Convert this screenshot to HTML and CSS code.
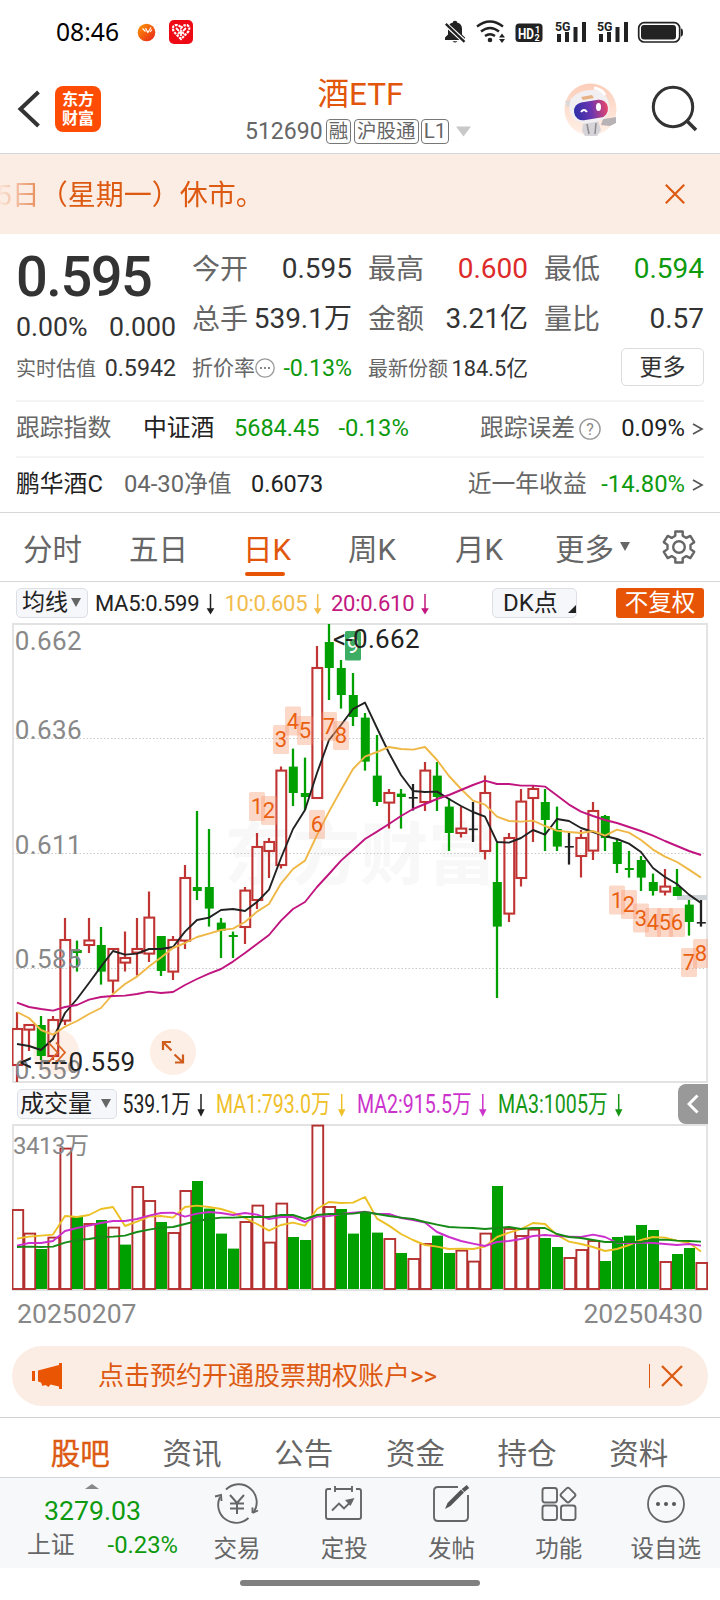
FILE: index.html
```html
<!DOCTYPE html>
<html lang="zh-CN">
<head>
<meta charset="utf-8">
<meta name="viewport" content="width=device-width, initial-scale=1">
<title>酒ETF 512690</title>
<link rel="stylesheet" href="styles.css">
</head>
<body>
<div class="phone">
  <div class="status">
    <span class="clock">08:46</span>
    <svg class="status-apps" width="60" height="30" viewBox="134 17 60 30">
      <defs><linearGradient id="ball" x1="0" y1="0" x2="1" y2="1"><stop offset="0" stop-color="#ff9a00"/><stop offset="1" stop-color="#e8201c"/></linearGradient></defs>
      <circle cx="146.500" cy="32.500" r="8.800" fill="url(#ball)"/>
      <path d="M142.500 28.500l3 3M145.500 28l2 4M147.500 33l3.500-5.500M150 32l2-2.500" stroke="#fff" stroke-width="1.200" fill="none"/>
      <rect x="169" y="20" width="24" height="24" rx="5" fill="#ee0a14"/>
      <path d="M181 39L174 32Q171 26 176 25Q180 25 181 28Q183 25 187 25Q191 27 188 32Z" fill="none" stroke="#fff" stroke-width="2.200" stroke-dasharray="2.500 1"/>
      <path d="M176 28l3 3M181 30v6M186 28l-3 3M178 34l2-2M184 34l-2-2" stroke="#fff" stroke-width="1.800"/>
    </svg>
    <svg class="status-right" width="242" height="30" viewBox="442 17 242 30">
      <g fill="#222">
        <path d="M445 40v-2.500l3-3V29q0-5.500 5-6.500v-1q2-1.500 4 0v1q5 1 5 6.500v5.500l3 3V40z"/>
        <path d="M452.500 41.300h5q-2.500 2.600-5 0z"/>
        <path d="M446 24.500L465 42" stroke="#fff" stroke-width="4.500"/>
        <path d="M445.800 23.800L464.500 41.800" stroke="#222" stroke-width="2.300"/>
        <circle cx="490" cy="40" r="2.300"/>
        <path d="M502 33.500l3 4h-6zM502 43l3-4h-6z"/>
        <rect x="515.500" y="23.500" width="27" height="18.500" rx="3.500"/>
        <path d="M557 34h4v8h-4zM565 32h4v10h-4zM573.500 27h4v15h-4zM582 22h4v20h-4zM599 34h4v8h-4zM607 32h4v10h-4zM615.500 27h4v15h-4zM624 22h4v20h-4z"/>
        <rect x="641" y="25" width="35" height="14.500" rx="3"/>
        <path d="M681 28.500q2 0 2 4t-2 4z"/>
      </g>
      <g fill="none" stroke="#222" stroke-width="2.400">
        <path d="M477 26.500Q490 16.500 503 26.500M481 31.500Q490 24.500 499 31.500M485 36Q490 32.500 495 36"/>
        <rect x="638.700" y="22.700" width="41" height="19.300" rx="5.500" stroke-width="1.700"/>
      </g>
      <g class="status-text">
        <text x="518" y="38.500" font-size="14" textLength="16" lengthAdjust="spacingAndGlyphs" fill="#fff">HD</text>
        <text x="535" y="32.500" font-size="9" fill="#fff">1</text>
        <text x="534.500" y="40.500" font-size="9" fill="#fff">2</text>
        <text x="555" y="31" font-size="13.500" textLength="15.500" lengthAdjust="spacingAndGlyphs" fill="#222">5G</text>
        <text x="597" y="31" font-size="13.500" textLength="15.500" lengthAdjust="spacingAndGlyphs" fill="#222">5G</text>
      </g>
    </svg>
  </div>

  <header class="header">
    <div class="header-left">
      <svg width="24" height="44" viewBox="17 87 24 44"><path d="M38.500 92L20.500 109L38.500 126" fill="none" stroke="#333" stroke-width="4"/></svg>
      <div class="logo">东方<br>财富</div>
    </div>
    <div class="title-box">
      <div class="title">酒ETF</div>
      <div class="subtitle"><span class="code">512690</span><span class="badge">融</span><span class="badge">沪股通</span><span class="badge level">L1</span>
        <svg class="caret" width="15" height="11" viewBox="0 0 15 11"><path d="M0 .5h15L7.500 10.500z" fill="#c8c8c8"/></svg>
      </div>
    </div>
    <div class="header-right">
      <svg width="56" height="56" viewBox="563 81 56 56">
        <defs>
          <linearGradient id="visor" x1="0" y1="0" x2="1" y2="0"><stop offset="0" stop-color="#2c2fa8"/><stop offset=".5" stop-color="#6a35b0"/><stop offset="1" stop-color="#e8456a"/></linearGradient>
          <linearGradient id="halo" x1="0" y1="0" x2="0" y2="1"><stop offset="0" stop-color="#fccdb9"/><stop offset="1" stop-color="#fff1e8"/></linearGradient>
        </defs>
        <circle cx="590.500" cy="109.500" r="26" fill="url(#halo)"/>
        <path d="M565 101l5-1 2 6-5 1z" fill="#ddd8da"/>
        <path d="M583 124l15-3 3 9-4 6h-12l-3-5z" fill="#d6d4d8"/>
        <path d="M603 119l8-1 5-1v6l-6 3-9-1z" fill="#b6b2b6"/>
        <path d="M587 124l2 10M596 123l-1 11" stroke="#8e8a90" stroke-width="1.500"/>
        <path d="M571 99Q578 90 592 90Q606 89 609 104Q611 116 602 120Q588 126 576 121Q566 113 571 99z" fill="#f1eff1"/>
        <rect x="574" y="101" width="34" height="18" rx="8.500" transform="rotate(-9 591 110)" fill="url(#visor)"/>
        <path d="M581 112q3-4 6 0" stroke="#fff" stroke-width="2" fill="none"/>
        <ellipse cx="598.500" cy="107" rx="2.500" ry="4" fill="#fff"/>
        <path d="M581 97l11-2 2 3-11 2z" fill="#e6b184"/>
        <path d="M594 88q8 1 11 7" stroke="#fff" stroke-width="3" fill="none"/>
      </svg>
      <svg width="48" height="48" viewBox="651 85 48 48"><circle cx="673" cy="107" r="19.700" fill="none" stroke="#333" stroke-width="3"/><path d="M686.500 120.500L696 130" stroke="#333" stroke-width="3.600"/></svg>
    </div>
  </header>

  <div class="notice">
    <div class="notice-text">5日（星期一）休市。</div>
    <svg class="notice-close" width="20" height="20" viewBox="0 0 20 20"><path d="M.8.800l18.400 18.400M19.200.800L.8 19.200" stroke="#dd5a12" stroke-width="2.200"/></svg>
  </div>

  <section class="quote">
    <div class="grid">
      <div class="price-box">
        <div class="price">0.595</div>
        <div class="change"><span>0.00%</span><span>0.000</span></div>
      </div>
      <div class="cell"><label>今开</label><b>0.595</b></div>
      <div class="cell"><label>最高</label><b class="up">0.600</b></div>
      <div class="cell"><label>最低</label><b class="down">0.594</b></div>
      <div class="cell"><label>总手</label><b>539.1万</b></div>
      <div class="cell"><label>金额</label><b>3.21亿</b></div>
      <div class="cell"><label>量比</label><b>0.57</b></div>
      <div class="cell small"><label>实时估值</label><b>0.5942</b></div>
      <div class="cell small"><label class="with-icon">折价率<svg width="20" height="20" viewBox="0 0 20 20"><circle cx="10" cy="10" r="9.200" fill="none" stroke="#999" stroke-width="1.300"/><path d="M5 10h2M9 10h2M13 10h2" stroke="#888" stroke-width="2"/></svg></label><b class="down">-0.13%</b></div>
      <div class="cell small"><label>最新份额</label><b class="share">184.5亿</b></div>
      <div class="cell small more-cell"><span class="more">更多</span></div>
    </div>
    <div class="line-row">
      <span class="c-gray w-a">跟踪指数</span><span class="w-b">中证酒</span><span class="down num">5684.45</span><span class="down pct">-0.13%</span>
      <span class="right"><span class="c-gray">跟踪误差</span><svg class="help" width="22" height="22" viewBox="0 0 22 22"><circle cx="11" cy="11" r="10.100" fill="none" stroke="#999" stroke-width="1.400"/><text x="11" y="16.500" text-anchor="middle" font-size="16" fill="#888">?</text></svg><span>0.09%</span><svg class="gt" width="12" height="14" viewBox="0 0 12 14"><path d="M1 2l9 5-9 5" fill="none" stroke="#555" stroke-width="1.700"/></svg></span>
    </div>
    <div class="line-row">
      <span class="w-c">鹏华酒C</span><span class="c-gray w-d">04-30净值</span><span class="num">0.6073</span>
      <span class="right"><span class="c-gray w-e">近一年收益</span><span class="down">-14.80%</span><svg class="gt" width="12" height="14" viewBox="0 0 12 14"><path d="M1 2l9 5-9 5" fill="none" stroke="#555" stroke-width="1.700"/></svg></span>
    </div>
  </section>

  <nav class="periods">
    <span>分时</span><span>五日</span><span class="active">日K</span><span>周K</span><span>月K</span>
    <span class="period-more">更多<svg width="10" height="9" viewBox="0 0 10 9"><path d="M0 0h10L5 9z" fill="#666"/></svg></span>
    <svg class="gear" width="36" height="36" viewBox="661 529 36 36" fill="none" stroke="#666" stroke-width="2.400" stroke-linejoin="round"><circle cx="679" cy="547" r="5.800"/><path d="M675.300 531.500h7.400v4.200l3.600 2.200 4-2 3.900 6.300-3.700 2.700v4.200l3.700 2.700-3.900 6.300-4-2-3.600 2.200v4.200h-7.400v-4.200l-3.600-2.200-4 2-3.900-6.300 3.700-2.700v-4.200l-3.700-2.700 3.900-6.300 4 2 3.600-2.200z"/></svg>
  </nav>

  <div class="ma-row">
    <span class="chip chip-ma">均线<svg width="10" height="9" viewBox="0 0 10 9"><path d="M0 0h10L5 9z" fill="#666"/></svg></span>
    <svg class="legend" width="350" height="41" viewBox="92 582 350 41" font-size="22">
      <g fill="#222" stroke="#222"><text x="95" y="610.700" textLength="104.500">MA5:0.599</text><path d="M210.500 594v17M208 609l2.500 4 2.500-4z"/></g>
      <g fill="#f2bc4c" stroke="#f2bc4c"><text x="224.500" y="610.700" textLength="83">10:0.605</text><path d="M317.700 594v17M315.200 609l2.500 4 2.500-4z"/></g>
      <g fill="#c2187f" stroke="#c2187f"><text x="331" y="610.700" textLength="83.500">20:0.610</text><path d="M425 594v17M422.500 609l2.500 4 2.500-4z"/></g>
    </svg>
    <span class="chip chip-dk">DK点<svg width="8" height="8" viewBox="0 0 8 8"><path d="M8 0v8H0z" fill="#222"/></svg></span>
    <span class="chip-adjust">不复权</span>
  </div>

  <svg id="kline" class="chart" width="696" height="460" viewBox="12 623 696 460">
    <text class="watermark" x="224" y="879">东方财富</text>
    <g fill="none" stroke="#c9c9c9" stroke-dasharray="1.500 2"><path d="M13 738.500H707M13 853.500H707M13 968.500H707"/></g>
    <path d="M13 624H707V1082H13Z" fill="none" stroke="#e2e2e2" stroke-width="1.800"/>
  </svg>

  <div class="vol-row">
    <span class="chip chip-vol">成交量<svg width="10" height="9" viewBox="0 0 10 9"><path d="M0 0h10L5 9z" fill="#666"/></svg></span>
    <svg class="legend" width="510" height="41" viewBox="120 1083 510 41" font-size="25">
      <g fill="#222" stroke="#222"><text x="122.500" y="1113" textLength="68" lengthAdjust="spacingAndGlyphs">539.1万</text><path d="M201 1094v17M198.500 1110l2.500 5 2.500-5z"/></g>
      <g fill="#efc02a" stroke="#efc02a"><text x="216" y="1113" textLength="114.500" lengthAdjust="spacingAndGlyphs">MA1:793.0万</text><path d="M341.700 1094v17M339.200 1110l2.500 5 2.500-5z"/></g>
      <g fill="#cc33cc" stroke="#cc33cc"><text x="357" y="1113" textLength="114.500" lengthAdjust="spacingAndGlyphs">MA2:915.5万</text><path d="M482.800 1094v17M480.300 1110l2.500 5 2.500-5z"/></g>
      <g fill="#159615" stroke="#159615"><text x="498" y="1113" textLength="109.500" lengthAdjust="spacingAndGlyphs">MA3:1005万</text><path d="M618.700 1094v17M616.200 1110l2.500 5 2.500-5z"/></g>
    </svg>
    <span class="collapse"><svg width="12" height="20" viewBox="0 0 12 20"><path d="M10.500 1.500L2 10l8.500 8.500" fill="none" stroke="#fff" stroke-width="3"/></svg></span>
  </div>

  <svg id="volume" class="chart" width="696" height="167" viewBox="12 1124 696 167">
    <path d="M13 1125H707V1290H13Z" fill="none" stroke="#e2e2e2" stroke-width="1.800"/>
  </svg>

  <div class="dates"><span>20250207</span><span>20250430</span></div>

  <div class="promo">
    <svg width="32" height="28" viewBox="31 1362 32 28" fill="#ea5504"><path d="M32 1371h3v10h-3zM38 1370.500l21-5.500v-2h3v26h-3v-2.500l-8.500-2 -2 2.500-3-2-3 1-1.500-3.500-3-1z"/></svg>
    <span class="promo-text">点击预约开通股票期权账户&gt;&gt;</span>
    <i class="promo-sep"></i>
    <svg width="22" height="22" viewBox="0 0 22 22"><path d="M1 1l20 20M21 1L1 21" stroke="#dd5a12" stroke-width="2.300"/></svg>
  </div>

  <nav class="sections"><span class="active">股吧</span><span>资讯</span><span>公告</span><span>资金</span><span>持仓</span><span>资料</span></nav>

  <footer class="bottom">
    <div class="index">
      <svg class="index-caret" width="14" height="5" viewBox="0 0 14 5"><path d="M7 0l7 5H0z" fill="#888"/></svg>
      <div class="index-value">3279.03</div>
      <div class="index-row"><span>上证</span><span class="down">-0.23%</span></div>
    </div>
    <div class="tool"><svg width="46" height="44" viewBox="214 1482 46 44" fill="none" stroke="#666" stroke-width="1.900"><path d="M226 1489.500A18 18 0 0 1 253.500 1512.500M248.500 1518A18 18 0 0 1 220 1497"/><path d="M215 1496.500l6-1.500.5 6M252.500 1513l5.500-2.500M252.500 1507.500v5.500"/><path d="M230 1495l7 8 7-8M230 1503.500h14M230 1508.500h14M237 1503v11" stroke-width="2"/></svg>交易</div>
    <div class="tool"><svg width="46" height="44" viewBox="322 1482 46 44" fill="none" stroke="#666" stroke-width="1.900"><path d="M332 1489h-3q-2 0-2 2v26q0 2 2 2h31q2 0 2-2v-26q0-2-2-2h-3M336 1489h17M336 1486v6M353 1486v6"/><path d="M333 1510.500l7-7 5 5 8-8"/><path d="M346 1500l9.500-2-4 8z" fill="#666" stroke="none"/></svg>定投</div>
    <div class="tool"><svg width="46" height="44" viewBox="428 1482 46 44" fill="none" stroke="#666" stroke-width="1.900"><path d="M458 1487h-20q-4 0-4 4v26q0 4 4 4h26q4 0 4-4v-22"/><path d="M445 1509l2.500-6L461 1489.500l3 3-13.500 13.500z" fill="#555" stroke="none"/><path d="M463 1490.500l5-4" stroke="#555" stroke-width="4"/></svg>发帖</div>
    <div class="tool"><svg width="46" height="44" viewBox="535 1482 46 44" fill="none" stroke="#666" stroke-width="1.900"><rect x="541.500" y="1488" width="14.500" height="14.500" rx="2.500"/><rect x="541.500" y="1505.500" width="14.500" height="14.500" rx="2.500"/><rect x="560" y="1505.500" width="14.500" height="14.500" rx="2.500"/><rect x="561.300" y="1489.300" width="11.500" height="11.500" rx="2" transform="rotate(45 567 1495)"/></svg>功能</div>
    <div class="tool"><svg width="46" height="44" viewBox="643 1482 46 44" fill="none" stroke="#666" stroke-width="1.800"><circle cx="666" cy="1504" r="18"/><g fill="#555" stroke="none"><circle cx="658" cy="1504" r="2"/><circle cx="666" cy="1504" r="2"/><circle cx="674" cy="1504" r="2"/></g></svg>设自选</div>
  </footer>
  <div class="home"><i></i></div>
</div>
<script src="chart.js"></script>
</body>
</html>
```
FILE: styles.css
```css
* { box-sizing: border-box; }
body { margin: 0; background: #fff; }
.phone { width: 720px; height: 1600px; overflow: hidden; background: #fff; color: #333; font-family: Roboto, "Noto Sans CJK SC", sans-serif; font-size: 24px; line-height: 1; white-space: nowrap; }
svg { display: block; flex: none; }
svg text { font-family: Roboto, "Noto Sans CJK SC", sans-serif; stroke: none; }
.up { color: #dd2a2a; }
.down { color: #0e9a0e; }
.c-gray { color: #666; }

.status { height: 64px; display: flex; align-items: center; padding: 0 36.500px 0 56px; }
.clock { font: 24.700px/30px "Noto Sans", sans-serif; color: #000; width: 78px; }
.status-right { margin-left: auto; }
.status-text { font-weight: 700; }

.header { height: 90px; border-bottom: 1.500px solid #d3d6da; display: grid; grid-template-columns: 200px 320px 200px; }
.header-left { display: flex; align-items: center; padding-left: 17px; gap: 14px; }
.logo { width: 46px; height: 46px; border-radius: 8px; background: #ff4c05; color: #fff; font-weight: 700; font-size: 16px; line-height: 19px; text-align: center; padding-top: 4px; }
.title-box { padding-top: 14px; }
.title { color: #e2560c; font-size: 31.500px; line-height: 34px; text-align: center; padding-left: 1px; }
.subtitle { display: flex; align-items: center; color: #666; height: 33px; padding: 6px 0 0 45px; }
.code { font-size: 23px; width: 80.500px; line-height: 28px; }
.badge { border: 1.300px solid #777; border-radius: 4px; font-size: 19.500px; line-height: 23px; height: 25px; padding: 0 2.200px; margin-right: 2.500px; }
.badge.level { font-size: 20.500px; padding: 0 1.500px; }
.caret { margin-left: 5px; }
.header-right { display: flex; align-items: center; padding-left: 43px; gap: 32px; }

.notice { height: 80px; background: #fcede4; display: flex; align-items: center; justify-content: space-between; padding-right: 35px; color: #dd5a12; }
.notice-text { font-size: 28px; line-height: 76px; padding-top: 4px; margin-left: -4px; -webkit-mask-image: linear-gradient(90deg, transparent 0, #000 64px); mask-image: linear-gradient(90deg, transparent 0, #000 64px); }

.quote { border-bottom: 1.500px solid #d8d8d8; height: 279px; padding: 9px 16px 0; }
.grid { display: grid; grid-template-columns: repeat(4, 160px); column-gap: 16px; grid-auto-rows: 50px; height: 157px; }
.price-box { grid-row: span 2; }
.price { font-size: 56px; font-weight: 500; line-height: 68px; letter-spacing: -1.500px; }
.change { display: flex; justify-content: space-between; font-size: 26.700px; line-height: 33px; }
.cell { display: flex; align-items: center; justify-content: space-between; padding-top: 3px; }
.cell label { font-size: 28px; color: #666; }
.cell b { font-weight: 400; font-size: 28px; margin-top: -1px; }
.small { padding-top: 1.500px; }
.small label { font-size: 20px; }
.small b { font-size: 23.200px; margin-top: 0; }
.small .share { font-size: 21.800px; }
.small .with-icon { display: flex; align-items: center; font-size: 21px; }
.with-icon svg { margin-top: -2px; }
.more-cell { justify-content: flex-end; padding-top: 0; }
.more { width: 83px; height: 38px; border: 1.500px solid #dcdcdc; border-radius: 5px; text-align: center; font-size: 23px; line-height: 37px; margin-top: -2px; }
.line-row { height: 56px; border-top: 2px solid #f4f4f4; display: flex; align-items: center; font-size: 23.800px; color: #222; }
.line-row .down { color: #0e9a0e; }
.line-row .c-gray { color: #666; }
.w-a { width: 127px; }
.w-b { width: 91px; }
.w-c { width: 108px; }
.w-d { width: 127px; }
.w-e { margin-right: 14.500px; }
.num { font-size: 23.500px; }
.pct { margin-left: 19px; }
.right { margin-left: auto; display: flex; align-items: center; }
.help { margin: 0 20px 0 4px; }
.gt { margin-left: 7px; }

.periods { height: 69px; border-bottom: 1.500px solid #d8d8d8; display: grid; grid-template-columns: 106px 113px 106px 107px 92px 114px auto; padding-left: 23px; align-items: center; font-size: 29.500px; color: #666; }
.periods span { position: relative; height: 67.500px; line-height: 75px; }
.periods .active { color: #e2560c; padding-left: 1px; }
.periods .active::after { content: ""; position: absolute; left: 3px; bottom: 4.500px; width: 40px; height: 4px; border-radius: 2px; background: #e85405; }
.period-more { display: flex; align-items: flex-start; gap: 6px; padding-left: 8px; }
.period-more svg { margin-top: 29px; }
.gear { margin-top: -1px; }

.ma-row, .vol-row { height: 41px; display: flex; align-items: center; padding-left: 16px; }
.chip { display: flex; align-items: center; height: 30px; border: 1.500px solid #dcdfe5; border-radius: 5px; background: #f6f7fa; color: #222; font-size: 23.500px; }
.chip-ma { width: 72px; padding-left: 5px; margin-right: 4px; gap: 3px; font-size: 23px; }
.chip-dk { width: 85px; padding-left: 10px; margin-left: 50px; font-size: 24px; }
.chip-dk svg { margin: 13px 0 0 10px; }
.chip-adjust { width: 88px; height: 30px; margin-left: 39px; border-radius: 3px; background: #e85405; color: #fff; font-size: 23.500px; line-height: 31px; text-align: center; }
.legend path { stroke-width: 1.500px; }
.chart { margin-left: 12px; }
.watermark { font-size: 68px; font-weight: 700; fill: #f8f8f8; }
.axis { font-size: 26px; fill: #888; letter-spacing: .4px; }
.td { font-size: 22px; fill: #ea5f10; text-anchor: middle; }
.callout { font-size: 26px; fill: #222; letter-spacing: .3px; }
.vol-row { padding-left: 17px; }
.chip-vol { width: 100px; padding-left: 2px; gap: 9px; margin-right: 3px; font-size: 24px; }
.collapse { width: 30px; height: 40px; margin-left: 48px; border-radius: 8px 0 0 8px; background: #999; display: grid; place-items: center; }

.dates { height: 44px; display: flex; justify-content: space-between; padding: 0 17px 0 17px; color: #888; font-size: 26.600px; line-height: 45px; }
.promo { height: 60px; margin: 11px 12px 0; border-radius: 30px; background: #fcede4; color: #dd5a12; display: flex; align-items: center; padding: 0 25px 0 19px; }
.promo-text { font-size: 26px; line-height: 61px; margin-left: 35px; }
.promo-sep { width: 1.500px; height: 24px; background: #dd5a12; margin: 0 11px 0 auto; }

.sections { height: 60px; margin-top: 11px; border-top: 1.500px solid #d3d3d3; display: grid; grid-template-columns: repeat(6, 111.700px); padding-left: 24.500px; font-size: 29.500px; color: #666; text-align: center; line-height: 72.500px; }
.sections .active { color: #dd5a12; -webkit-text-stroke: .4px #dd5a12; }
.bottom { height: 91px; background: #f7f8fa; border-top: 1.500px solid #d3d6da; display: grid; grid-template-columns: 183.500px repeat(5, 107.200px); color: #666; }
.index-caret { margin: 6px 0 0 85px; }
.index-value { font-size: 26.700px; line-height: 32px; color: #0e9a0e; padding-left: 44px; margin-top: 6px; }
.index-row { display: flex; gap: 33px; padding-left: 27px; line-height: 36px; font-size: 23.800px; }
.tool { display: flex; flex-direction: column; align-items: center; font-size: 23.500px; line-height: 46px; padding-top: 4px; }
.home { height: 32px; display: flex; justify-content: center; padding-top: 12px; }
.home i { width: 240px; height: 6px; border-radius: 3px; background: #808080; }
```
FILE: chart.js
```js
const NS = "http://www.w3.org/2000/svg";
const RED = "#c03434", GREEN = "#00a000", BLACK = "#222";
const xAt = i => 17 + 12 * i;

function add(parent, tag, attrs, text) {
  const el = document.createElementNS(NS, tag);
  for (const k in attrs) el.setAttribute(k, attrs[k]);
  if (text) el.textContent = text;
  parent.appendChild(el);
  return el;
}
function line(parent, ys, color) {
  add(parent, "polyline", { points: ys.map((y, i) => xAt(i) + "," + y).join(" "), fill: "none", stroke: color, "stroke-width": 1.9, "stroke-linejoin": "round" });
}

// kind, high, body top, body bottom, low
const candles = [
  ["r",1012,1029,1065,1082],["r",1024,1025,1029.6,1051],["g",1016,1025,1056,1060],["r",1016,1020,1056,1060],
  ["r",918,940,1020.6,1025],["g",940.6,950,953,971.6],["r",918,940.5,945,953],["g",927,945,971.6,984.6],
  ["r",948.6,949,980.6,993],["r",931.6,958,962.6,971.6],["r",918,949,952.6,975.6],["r",891.6,917.6,953.6,962],
  ["g",936,936,971,976],["r",936,940,971.6,980],["r",865,878,940.6,949],["g",811,887,891,900],
  ["g",829,887,908.6,926.6],["g",918,922.6,930.6,958],["g",931.6,935,937,958],["r",887,890.6,927,944],
  ["r",833,847,900,909],["r",838,842,851,878],["r",766.6,770.6,865,868.6],["g",748.6,766.6,793,806],
  ["g",757.6,793,797,810],["r",646,668,798,798],["g",624,642,668,700],["g",660,668,695,708.6],
  ["g",673,695,717,726],["g",713,717.6,761.6,770.6],["g",735,775.6,802,806],["r",789,793,802.6,828.6],
  ["g",789,793.6,797,828.6],["k",784,797,798.5,810.6],["r",762,770.6,802,811],["g",762,775.6,797,811],
  ["g",798,806.6,833,851],["r",806.6,828.6,833,837.6],["k",802,828.5,830,842],["r",775.6,793,851,859.6],
  ["g",842.6,882,926.6,998],["r",833,838,913.6,922],["r",789,801.6,878,886.6],["r",785,789,798,842],
  ["g",789,802,820,851],["g",806.6,829,846.6,851],["k",833,846,847.5,864.6],["r",830,838,856,877.6],
  ["r",802,811,850.6,860],["g",815,816,838,851],["g",838.6,842,864,873],["g",851,868,870,877.6],
  ["g",856,860,877.6,891],["g",873.6,882,891,895.6],["r",869,886.6,891.6,895.6],["g",869,887,896,896],
  ["g",900,904.6,922,935.6],["k",900,922,923.5,926.6]
];
const ma5 = [1044,1046,1050,1039,1013,999,983,966.6,951,954.6,953.6,949,949,947,931.6,920,917.6,910,909,911,902,889.6,858,829,810,773,740,725,709,702.6,728,753,775,791,792,791.6,799,806,812,816.6,842,842.6,838,830,834.6,819,821,828,832,836,839,843.6,852,868,877,884,894.6,903];
const ma10 = [1012,1018,1030,1034.6,1026.6,1021,1014,1008,994,984,976.6,966.6,957.6,948,943,937,933.6,930,928.6,922,911.6,904,883.6,869,860.6,835,811.6,790,769,756.6,752,747,749,749.6,747,760,776,789,800.6,804.6,816.6,821,821.6,820.6,826,830.6,832,833,831,835.6,829.6,832.6,840,849.6,856.6,862,869.6,877.6];
const ma20 = [1002.6,1007,1009,1010.6,1007,1005,999.6,997,996,995.6,994,991.6,993,992,985,979,973.6,969,961.6,953,944,935,920.6,909,902,887,874,860.6,850,839,831.6,824,816,809,804,799,795,790,785,780.6,784,784,785.6,785.6,786.6,795.6,804.6,811.6,816,820,823,827,831,835.6,841,846,851,855];

const k = document.getElementById("kline");
add(k, "circle", { cx: 56, cy: 1052, r: 23, fill: "#fdeee6" });
add(k, "rect", { x: 677, y: 895, width: 30, height: 5, fill: "#cfd4d8" });
candles.forEach(([kind, high, top, bottom, low], i) => {
  const x = xAt(i);
  if (kind === "r") {
    add(k, "path", { d: `M${x} ${high}V${top}M${x} ${bottom}V${low}`, stroke: RED, "stroke-width": 2.2 });
    add(k, "rect", { x: x - 4.6, y: top, width: 9.8, height: Math.max(bottom - top, 1), fill: "none", stroke: RED, "stroke-width": 2.1 });
  } else {
    const c = kind === "g" ? GREEN : BLACK;
    add(k, "path", { d: `M${x} ${high}V${low}`, stroke: c, "stroke-width": 2.3 });
    add(k, "rect", { x: x - 4.2, y: top, width: 9, height: Math.max(bottom - top, 1.6), fill: c });
  }
});

[["0.662",650],["0.636",738.6],["0.611",854],["0.585",967.6],["0.559",1078.6]].forEach(([t, y]) =>
  add(k, "text", { class: "axis", x: 14.8, y }, t));

line(k, ma5, BLACK);
line(k, ma10, "#efb846");
line(k, ma20, "#c0147e");

// sequence counters: label, candle index, box top
[[1,20,792],[2,21,796],[3,22,725],[4,23,706.6],[5,24,716],[6,25,810],[7,26,712],[8,27,721],
 [1,50,885.6],[2,51,890],[3,52,903.6],[4,53,908],[5,54,908],[6,55,908],[7,56,948],[8,57,939]].forEach(([n, i, y]) => {
  add(k, "rect", { x: xAt(i) - 8, y, width: 16, height: 29, rx: 1.5, fill: "#f79468", "fill-opacity": .36 });
  add(k, "text", { class: "td", x: xAt(i), y: y + 22.3 }, String(n));
});
add(k, "rect", { x: 345, y: 631, width: 16, height: 29.5, rx: 1.5, fill: "#3dad63" });
add(k, "text", { class: "td", x: 353, y: 653, style: "fill:#fff" }, "9");

add(k, "path", { d: "M48.500 1042.500l9 10-9 10M56 1042.500l9 10-9 10", fill: "none", stroke: "#dc6420", "stroke-width": 1.8 });
add(k, "circle", { cx: 173, cy: 1052, r: 23, fill: "#fdeee6" });
add(k, "path", { d: "M163 1050v-8h8M163 1042l8.500 8.500M174.500 1054.500l8.500 8M175 1062.500h8v-8", fill: "none", stroke: "#cf5c1d", "stroke-width": 2.2 });

add(k, "text", { class: "callout", x: "333 345.5 353", y: 647.5 }, "<-0.662");
add(k, "text", { class: "callout", x: "19.5 34.5 43 51.500 60 68.500", y: 1071 }, "<----0.559");

const tops = [1210,1233.6,1249,1237.6,1148.6,1217,1224,1220,1227.6,1244.6,1187,1201,1222,1233,1191,1181,1208.6,1233.6,1248.6,1222,1205.6,1242.6,1203.6,1237,1240,1125.6,1207,1209,1233.6,1212,1232.6,1239,1253,1259,1244,1235.6,1253,1250.6,1261.6,1233.6,1186,1229,1236,1229.6,1238,1247,1258,1250,1241,1261,1237,1235.6,1225,1230,1262,1254,1248,1263];
const volKinds = "rrgrrgrgrgrrgrrggggrrrrggrrggggrgrrggrrrgrrrggrrrgggggrggr";
const vma1 = [1238.6,1236.6,1235.6,1234.6,1216,1217,1215,1209,1207,1226,1221.6,1216.6,1216,1217.6,1207,1205.6,1207,1209,1212.6,1218,1224,1230.6,1225,1222.6,1225.6,1209,1202,1203,1202.6,1197,1218.6,1225.6,1234,1240,1245,1246.6,1249,1248.6,1249,1246.6,1237,1232.6,1229,1223,1224,1235,1241.6,1244,1247,1251,1249,1245,1240,1237,1237.6,1240.6,1243,1251.6];
const vma2 = [1245.6,1243,1243,1241,1231,1228,1225.6,1223,1221,1221,1219,1215.6,1213,1212.6,1216.6,1213.6,1212,1213,1215,1213,1214.6,1219,1217,1217,1222,1216.6,1216,1214,1212.6,1211.6,1214,1214,1218,1220,1222.6,1232,1237,1241,1243.6,1246,1242,1241,1239,1236,1235,1236,1236.6,1237,1234.6,1237,1242.6,1243,1242.6,1243,1244,1245,1244,1245.6];
const vma3 = [1247,1246.6,1247,1246.6,1242.6,1240,1239,1237,1236.6,1235.6,1232,1229.6,1227.6,1227,1224,1221,1219,1217.6,1217.6,1217,1217,1217,1215,1215,1219,1215,1214,1214,1213.6,1212,1214,1216,1217.6,1219,1222,1224.6,1227,1227.6,1228,1229,1228,1227,1229,1228,1228,1234,1237,1238,1240,1242,1242,1242,1242,1240,1239.6,1240.6,1241,1241.6];

const v = document.getElementById("volume");
tops.forEach((top, i) => {
  const x = xAt(i);
  if (volKinds[i] === "g") add(v, "rect", { x: x - 5, y: top, width: 11, height: 1289 - top, fill: GREEN });
  else add(v, "rect", { x: x - 4.6, y: top, width: 10.8, height: 1289 - top, fill: "none", stroke: "#b4302e", "stroke-width": 1.9 });
});
add(v, "text", { x: 13, y: 1154, fill: "#888", "font-size": 24, textLength: 76 }, "3413万");
line(v, vma1, "#ecc024");
line(v, vma2, "#cc2fcc");
line(v, vma3, "#158a15");
```
